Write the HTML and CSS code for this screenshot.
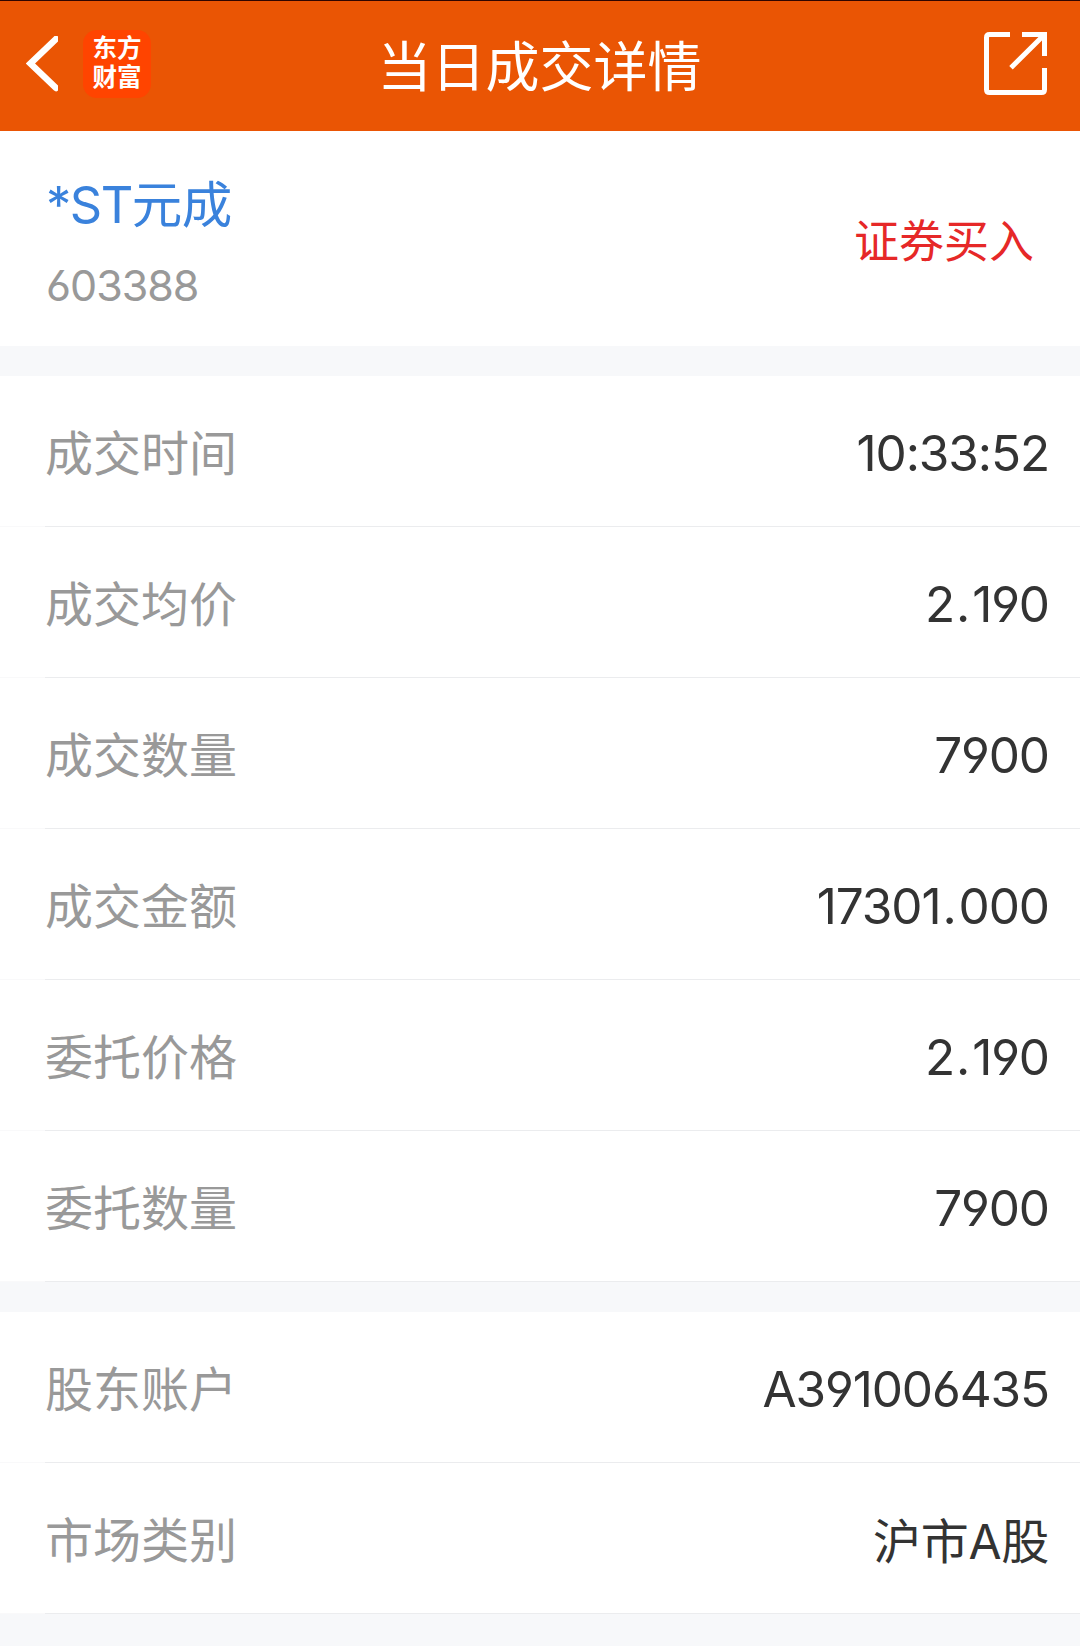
FILE: index.html
```html
<!DOCTYPE html>
<html lang="zh-CN">

<head>
    <meta charset="UTF-8">
    <meta name="viewport" content="width=device-width, initial-scale=1.0">
    <title>当日成交详情</title>
    <link rel="stylesheet" href="styles.css">
</head>

<body>
    <div class="header">
        <div class="left">
            <a href="#" class="back">
                <svg width="32" height="56" viewBox="0 0 32 56">
                    <path d="M30 3 4.500 27.500l25.500 24.500" />
                </svg>
            </a>
            <div class="logo">
                <span>东方</span>
                <span>财富</span>
            </div>
        </div>
        <h1>当日成交详情</h1>
        <a href="#" class="share">
            <svg width="64" height="64" viewBox="0 0 64 64">
                <path d="M26 2.500H5.500Q2.500 2.500 2.500 5.500V57.500Q2.500 60.500 5.500 60.500H57.500Q60.500 60.500 60.500 57.500V36" />
                <path d="M38 2.500H60.500V24M60 3 27 35.800" />
            </svg>
        </a>
    </div>

    <div class="stock">
        <div class="name">
            <h2><span>*ST</span>元成</h2>
            <p>603388</p>
        </div>
        <div class="type">证券买入</div>
    </div>

    <div class="list">
        <div class="item">
            <span class="label">成交时间</span>
            <span class="value">10:33:52</span>
        </div>
        <div class="item">
            <span class="label">成交均价</span>
            <span class="value">2<span class="dot">.</span>190</span>
        </div>
        <div class="item">
            <span class="label">成交数量</span>
            <span class="value">7900</span>
        </div>
        <div class="item">
            <span class="label">成交金额</span>
            <span class="value">17301<span class="dot">.</span>000</span>
        </div>
        <div class="item">
            <span class="label">委托价格</span>
            <span class="value">2<span class="dot">.</span>190</span>
        </div>
        <div class="item">
            <span class="label">委托数量</span>
            <span class="value">7900</span>
        </div>
    </div>

    <div class="list">
        <div class="item">
            <span class="label">股东账户</span>
            <span class="value">A391006435</span>
        </div>
        <div class="item">
            <span class="label">市场类别</span>
            <span class="value text">沪市A股</span>
        </div>
    </div>
</body>

</html>
```
FILE: styles.css
```css
* {
    padding: 0;
    margin: 0;
    box-sizing: border-box;
}

body {
    background-color: #f7f8fa;
    font-family: Inter, "Noto Sans CJK SC", sans-serif;
    /* 6 和 9 用直线的写法 */
    font-feature-settings: "cv03", "cv04";
}

svg {
    display: block;
    fill: none;
    stroke: #fff;
    stroke-width: 5;
}

.header {
    height: 131px;
    padding: 0 32px 0 26px;
    border-top: 1px solid #300500;
    background-color: #ea5504;
    display: grid;
    /* 左右同宽，标题才会置中 */
    grid-template-columns: 1fr auto 1fr;
    align-items: center;
}

.header h1 {
    padding: 4px 0 0 5px;
    color: #fff;
    font-size: 54px;
    font-weight: 400;
    line-height: 80px;
}

.left {
    display: flex;
    align-items: center;
}

.back svg {
    margin-bottom: 5px;
    stroke-width: 6.5;
    stroke-linecap: round;
}

.logo {
    width: 68px;
    height: 68px;
    margin: 0 0 5px 25px;
    padding-top: 4px;
    border-radius: 14px;
    background-color: #ff4400;
    color: #fff;
    font-size: 24.5px;
    font-weight: 700;
    line-height: 29px;
    text-align: center;
}

.logo span {
    display: block;
}

.share {
    margin-bottom: 5px;
    justify-self: end;
}

.stock {
    height: 215px;
    padding: 0 46px;
    background-color: #fff;
    display: flex;
    justify-content: space-between;
    align-items: center;
}

.name {
    padding-top: 12px;
}

.stock h2 {
    color: #3a82dc;
    font-size: 50.5px;
    font-weight: 400;
    line-height: 80px;
    letter-spacing: -0.5px;
}

.stock h2 span {
    letter-spacing: -1.5px;
}

.stock p {
    color: #999;
    font-size: 43px;
    line-height: 80px;
    letter-spacing: -1px;
}

.type {
    color: #e62828;
    font-size: 45px;
}

.list {
    margin-top: 30px;
}

.item {
    height: 151px;
    padding: 0 31px 0 45px;
    /* 分隔线：左边留白的部份颜色较淡 */
    background: linear-gradient(to right, #f9f9fa 45px, #ebecee 45px) bottom / 100% 1px no-repeat #fff;
    display: flex;
    justify-content: space-between;
    align-items: center;
}

.label {
    padding-bottom: 4px;
    color: #999;
    font-size: 48px;
}

.value {
    padding-top: 2px;
    color: #333;
    font-size: 49.5px;
    letter-spacing: -1.1px;
}

/* 小数点左右留一点空隙 */
.dot {
    padding: 0 3px 0 2px;
}

.text {
    padding: 0 0 2px;
    font-size: 48px;
    letter-spacing: -0.3px;
}
```
